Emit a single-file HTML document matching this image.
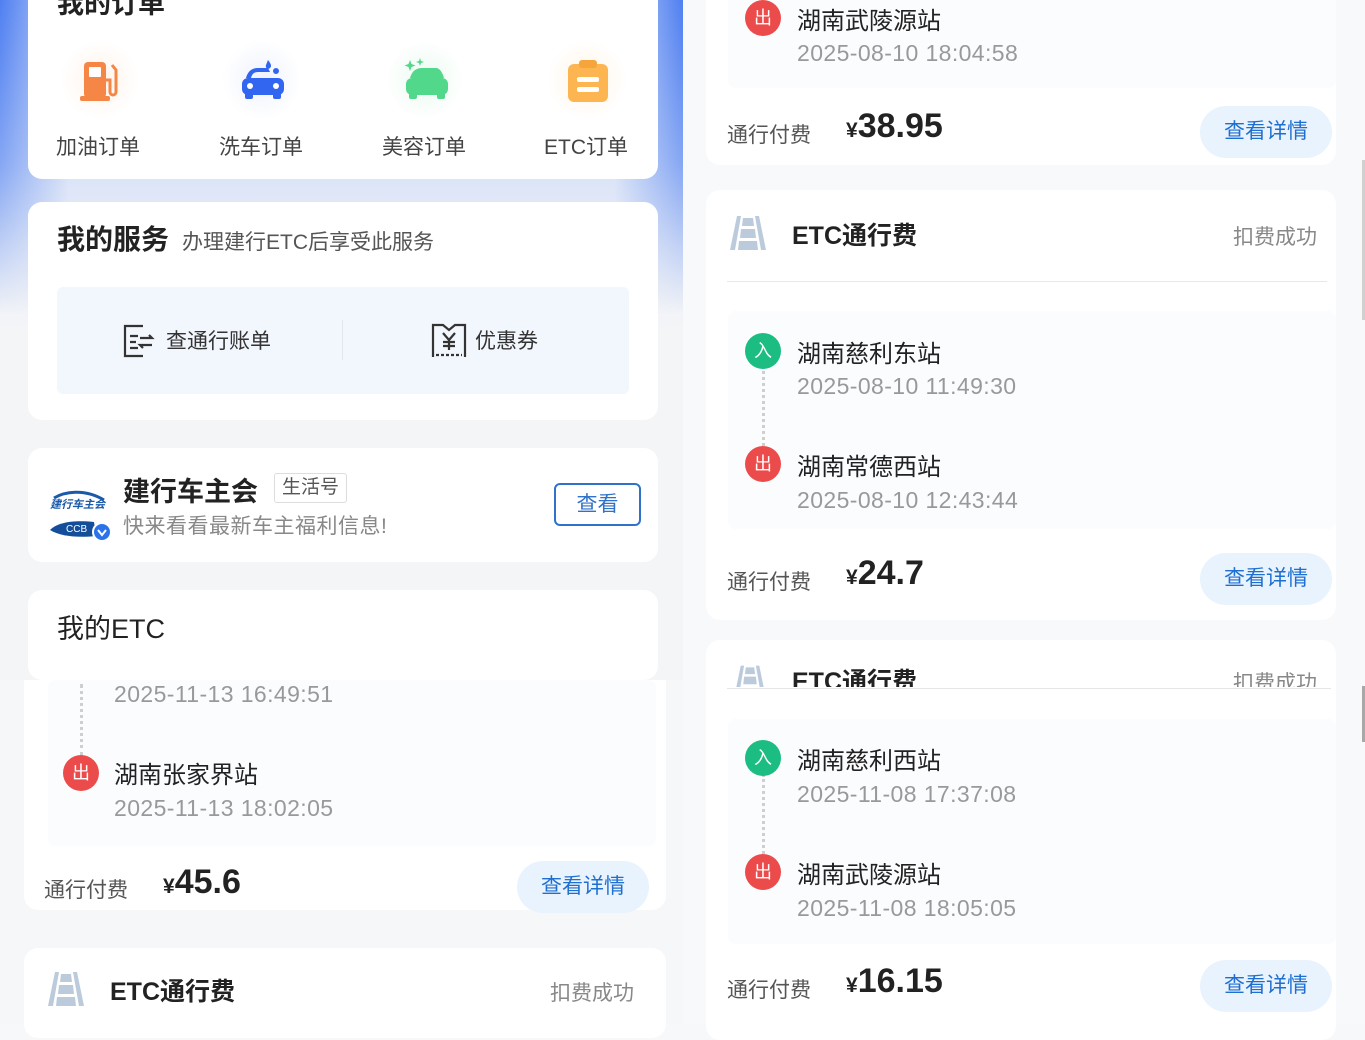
<!DOCTYPE html>
<html><head><meta charset="utf-8"><style>
*{margin:0;padding:0;box-sizing:border-box}
body{width:1365px;height:1024px;overflow:hidden;position:relative;background:#f7f8fa;font-family:"Liberation Sans","Noto Sans CJK SC",sans-serif;color:#222}
.a{position:absolute;white-space:nowrap}
.card{position:absolute;background:#fff;border-radius:14px}
.st{font-size:24px;color:#222}
.dt{font-size:23px;color:#999;letter-spacing:0.4px}
.fee{font-size:21px;color:#555}
.amt{font-size:34px;font-weight:bold;color:#222}
.amt small{font-size:21px;font-weight:bold}
.btn{position:absolute;width:132px;height:52px;border-radius:26px;background:#e9f3fd;color:#1f6fd1;font-size:21px;text-align:center;line-height:52px}
.dot{position:absolute;width:36px;height:36px;border-radius:50%;color:#fff;font-size:18px;text-align:center;line-height:36px}
.in{background:#1cbd82}.out{background:#ec4b4b}
.vl{position:absolute;width:0;border-left:3px dotted #cfcfcf}
.inner{position:absolute;background:#fbfcfe;border-radius:8px}
.et{font-size:25px;font-weight:bold}
.ok{font-size:21px;color:#888}
</style></head><body>
<!-- left background -->
<div class="a" style="left:0;top:0;width:683px;height:680px;background:#f4f5f7"></div>
<div class="a" style="left:0;top:0;width:683px;height:330px;background:linear-gradient(180deg,#c3d3f8 0%,#d5e0f8 45%,#eaeef7 75%,#f4f5f7 100%)"></div>
<div class="a" style="left:0;top:0;width:683px;height:330px;background:linear-gradient(90deg,#4f7ff0 0%,rgba(120,160,245,0) 10%,rgba(120,160,245,0) 90%,#4f7ff0 100%);-webkit-mask-image:linear-gradient(180deg,#000 0%,rgba(0,0,0,.6) 50%,transparent 95%);mask-image:linear-gradient(180deg,#000 0%,rgba(0,0,0,.6) 50%,transparent 95%)"></div>
<div class="a" style="left:0;top:680px;width:683px;height:344px;background:#f6f7f9"></div>
<div class="a" style="left:683px;top:0;width:682px;height:1024px;background:#f8f9fb"></div>

<!-- Card 1 orders -->
<div class="card" style="left:28px;top:-20px;width:630px;height:199px"></div>
<div class="a" style="left:57px;top:-18px;font-size:27px;font-weight:bold">我的订单</div>
<div class="a" style="left:60px;top:40px;width:80px;height:80px;border-radius:50%;background:radial-gradient(#fff3ea,#fff 70%)"></div>
<div class="a" style="left:222px;top:40px;width:80px;height:80px;border-radius:50%;background:radial-gradient(#eef2fd,#fff 70%)"></div>
<div class="a" style="left:385px;top:40px;width:80px;height:80px;border-radius:50%;background:radial-gradient(#eafaf0,#fff 70%)"></div>
<div class="a" style="left:547px;top:40px;width:80px;height:80px;border-radius:50%;background:radial-gradient(#fff4e4,#fff 70%)"></div>
<svg class="a" style="left:78px;top:58px" width="46" height="46" viewBox="0 0 46 46"><rect x="6" y="4" width="22" height="36" rx="4" fill="#f58646"/><rect x="11" y="9" width="12" height="10" rx="1" fill="#fff"/><rect x="2" y="38" width="30" height="5" rx="2" fill="#f58646"/><path d="M28 22h4v12a3 3 0 0 0 6 0V12l-4-5" stroke="#f58646" stroke-width="3" fill="none"/></svg>
<svg class="a" style="left:238px;top:58px" width="48" height="44" viewBox="0 0 48 44"><path d="M8 20c2-7 6-10 12-10h10l2 4H20c-4 0-6 2-7 6z" fill="#3366f0"/><rect x="4" y="20" width="42" height="17" rx="6" fill="#3366f0"/><rect x="7" y="34" width="8" height="7" rx="2" fill="#3366f0"/><rect x="35" y="34" width="8" height="7" rx="2" fill="#3366f0"/><circle cx="12" cy="28" r="3" fill="#fff"/><circle cx="38" cy="28" r="3" fill="#fff"/><path d="M30 2c3 4 4 6 2 8s-5 0-4-3z" fill="#3366f0"/><circle cx="38" cy="13" r="3" fill="#3366f0"/></svg>
<svg class="a" style="left:402px;top:58px" width="48" height="44" viewBox="0 0 48 44"><path d="M8 20c2-7 6-10 12-10h14c3 0 6 3 8 10z" fill="#52d88a"/><rect x="4" y="20" width="42" height="17" rx="6" fill="#52d88a"/><rect x="7" y="34" width="8" height="7" rx="2" fill="#52d88a"/><rect x="35" y="34" width="8" height="7" rx="2" fill="#52d88a"/><path d="M8 2l1.5 4 4 1.5-4 1.5L8 13l-1.5-4-4-1.5 4-1.5z M18 0l1 3 3 1-3 1-1 3-1-3-3-1 3-1z" fill="#52d88a"/></svg>
<svg class="a" style="left:566px;top:58px" width="44" height="46" viewBox="0 0 44 46"><rect x="2" y="6" width="40" height="38" rx="6" fill="#fdb552"/><rect x="13" y="2" width="18" height="8" rx="3" fill="#f5a53c"/><rect x="11" y="19" width="22" height="5" rx="2" fill="#fff"/><rect x="11" y="29" width="22" height="5" rx="2" fill="#fff"/></svg>
<div class="a" style="left:56px;top:131px;font-size:21px;color:#444">加油订单</div>
<div class="a" style="left:219px;top:131px;font-size:21px;color:#444">洗车订单</div>
<div class="a" style="left:382px;top:131px;font-size:21px;color:#444">美容订单</div>
<div class="a" style="left:544px;top:131px;font-size:21px;color:#444">ETC订单</div>

<!-- Card 2 services -->
<div class="card" style="left:28px;top:202px;width:630px;height:218px"></div>
<div class="a" style="left:57px;top:218px;font-size:28px;font-weight:bold">我的服务</div>
<div class="a" style="left:182px;top:226px;font-size:21px;color:#555">办理建行ETC后享受此服务</div>
<div class="a" style="left:57px;top:287px;width:572px;height:107px;background:#f2f6fd;border-radius:6px"></div>
<div class="a" style="left:342px;top:320px;width:1px;height:40px;background:#e3e8f0"></div>
<svg class="a" style="left:122px;top:324px" width="34" height="34" viewBox="0 0 34 34" fill="none" stroke="#333" stroke-width="2.2"><path d="M21 2H3v30h18"/><path d="M8 12h8M8 18h6M8 24h8M18 14h12l-3-3M30 21H18l3 3"/></svg>
<div class="a" style="left:166px;top:325px;font-size:21px;color:#333">查通行账单</div>
<svg class="a" style="left:431px;top:323px" width="36" height="36" viewBox="0 0 36 36" fill="none" stroke="#333" stroke-width="2.2"><path d="M2 34V2h10l6 5 6-5h10v32"/><path d="M5 32h26" stroke-dasharray="3 2"/><path d="M12 10l6 7 6-7M18 17v10M12 19h12M12 23h12"/></svg>
<div class="a" style="left:475px;top:325px;font-size:21px;color:#333">优惠券</div>

<!-- Card 3 CCB -->
<div class="card" style="left:28px;top:448px;width:630px;height:114px"></div>
<svg class="a" style="left:46px;top:486px" width="66" height="58" viewBox="0 0 66 58"><path d="M8 12c10-6 30-10 50 2" stroke="#1a5aa8" stroke-width="3" fill="none"/><text x="4" y="22" font-size="11" font-weight="bold" font-style="italic" fill="#1a5aa8" font-family="Noto Sans CJK SC,sans-serif">建行车主会</text><path d="M4 44c8-8 24-10 44-8l2 14c-20 2-36 0-46-6z" fill="#144e9b"/><text x="20" y="46" font-size="10" fill="#fff" font-family="Liberation Sans">CCB</text><circle cx="56" cy="46" r="9" fill="#2a73ea" stroke="#fff" stroke-width="2"/><path d="M52 44l4 5 4-5" stroke="#fff" stroke-width="2" fill="none"/></svg>
<div class="a" style="left:123px;top:470px;font-size:27px;font-weight:bold">建行车主会</div>
<div class="a" style="left:274px;top:473px;height:30px;padding:0 7px;border:1px solid #ddd;border-radius:3px;font-size:19px;color:#555;line-height:28px">生活号</div>
<div class="a" style="left:123px;top:510px;font-size:21px;color:#888;letter-spacing:0.5px">快来看看最新车主福利信息!</div>
<div class="a" style="left:554px;top:483px;width:87px;height:43px;border:2px solid #2f72c8;border-radius:6px;color:#2f72c8;font-size:21px;text-align:center;line-height:39px">查看</div>

<!-- Card 4 my ETC -->
<div class="card" style="left:28px;top:590px;width:630px;height:90px"></div>
<div class="a" style="left:57px;top:607px;font-size:27px">我的ETC</div>

<!-- left lower card -->
<div class="card" style="left:24px;top:680px;width:642px;height:230px;border-radius:0 0 14px 14px"></div>
<div class="inner" style="left:48px;top:680px;width:608px;height:166px"></div>
<div class="vl" style="left:80px;top:684px;height:72px"></div>
<div class="a dt" style="left:114px;top:681px">2025-11-13 16:49:51</div>
<div class="dot out" style="left:63px;top:755px">出</div>
<div class="a st" style="left:114px;top:755px">湖南张家界站</div>
<div class="a dt" style="left:114px;top:795px">2025-11-13 18:02:05</div>
<div class="a fee" style="left:44px;top:874px">通行付费</div>
<div class="a amt" style="left:163px;top:863px"><small>¥</small>45.6</div>
<div class="btn" style="left:517px;top:861px">查看详情</div>
<div class="card" style="left:24px;top:948px;width:642px;height:90px"></div>
<svg class="a" style="left:47px;top:972px" width="38" height="34" viewBox="0 0 38 34"><path d="M8 0L1 34h5L12 0zM30 0l7 34h-5L26 0z" fill="#bccbdc"/><path d="M14 2h10l1 8H13zM12 13h14l1 9H11zM10 25h18l1 9H9z" fill="#bccbdc"/></svg>
<div class="a et" style="left:110px;top:972px">ETC通行费</div>
<div class="a ok" style="left:550px;top:977px">扣费成功</div>

<!-- RIGHT card A -->
<div class="card" style="left:706px;top:-20px;width:630px;height:185px"></div>
<div class="inner" style="left:728px;top:-10px;width:608px;height:98px"></div>
<div class="dot out" style="left:745px;top:0px">出</div>
<div class="a st" style="left:797px;top:1px">湖南武陵源站</div>
<div class="a dt" style="left:797px;top:40px">2025-08-10 18:04:58</div>
<div class="a fee" style="left:727px;top:119px">通行付费</div>
<div class="a amt" style="left:846px;top:107px"><small>¥</small>38.95</div>
<div class="btn" style="left:1200px;top:106px">查看详情</div>

<!-- RIGHT card B -->
<div class="card" style="left:706px;top:190px;width:630px;height:430px"></div>
<svg class="a" style="left:729px;top:216px" width="38" height="34" viewBox="0 0 38 34"><path d="M8 0L1 34h5L12 0zM30 0l7 34h-5L26 0z" fill="#bccbdc"/><path d="M14 2h10l1 8H13zM12 13h14l1 9H11zM10 25h18l1 9H9z" fill="#bccbdc"/></svg>
<div class="a et" style="left:792px;top:216px">ETC通行费</div>
<div class="a ok" style="left:1233px;top:221px">扣费成功</div>
<div class="a" style="left:727px;top:281px;width:600px;height:1px;background:#e8e8e8"></div>
<div class="inner" style="left:728px;top:311px;width:608px;height:218px"></div>
<div class="vl" style="left:762px;top:366px;height:80px"></div>
<div class="dot in" style="left:745px;top:333px">入</div>
<div class="a st" style="left:797px;top:334px">湖南慈利东站</div>
<div class="a dt" style="left:797px;top:373px">2025-08-10 11:49:30</div>
<div class="dot out" style="left:745px;top:446px">出</div>
<div class="a st" style="left:797px;top:447px">湖南常德西站</div>
<div class="a dt" style="left:797px;top:487px">2025-08-10 12:43:44</div>
<div class="a fee" style="left:727px;top:566px">通行付费</div>
<div class="a amt" style="left:846px;top:554px"><small>¥</small>24.7</div>
<div class="btn" style="left:1200px;top:553px">查看详情</div>

<!-- RIGHT card C -->
<div class="card" style="left:706px;top:640px;width:630px;height:400px"></div>
<div class="a" style="left:706px;top:655px;width:630px;height:32px;overflow:hidden">
<svg class="a" style="left:28px;top:8px" width="32" height="34" viewBox="0 0 38 34"><path d="M8 0L1 34h5L12 0zM30 0l7 34h-5L26 0z" fill="#bccbdc"/><path d="M14 2h10l1 8H13zM12 13h14l1 9H11z" fill="#bccbdc"/></svg>
<div class="a et" style="left:86px;top:7px">ETC通行费</div>
<div class="a ok" style="left:527px;top:12px">扣费成功</div>
</div>
<div class="a" style="left:727px;top:688px;width:604px;height:1px;background:#e6e6e6"></div>
<div class="inner" style="left:728px;top:719px;width:608px;height:225px"></div>
<div class="vl" style="left:762px;top:774px;height:80px"></div>
<div class="dot in" style="left:745px;top:740px">入</div>
<div class="a st" style="left:797px;top:741px">湖南慈利西站</div>
<div class="a dt" style="left:797px;top:781px">2025-11-08 17:37:08</div>
<div class="dot out" style="left:745px;top:854px">出</div>
<div class="a st" style="left:797px;top:855px">湖南武陵源站</div>
<div class="a dt" style="left:797px;top:895px">2025-11-08 18:05:05</div>
<div class="a fee" style="left:727px;top:974px">通行付费</div>
<div class="a amt" style="left:846px;top:962px"><small>¥</small>16.15</div>
<div class="btn" style="left:1200px;top:960px">查看详情</div>

<!-- scrollbar -->
<div class="a" style="left:1362px;top:160px;width:3px;height:160px;background:#d0d0d0"></div>
<div class="a" style="left:1362px;top:686px;width:3px;height:56px;background:#a8a8a8"></div>
</body></html>
